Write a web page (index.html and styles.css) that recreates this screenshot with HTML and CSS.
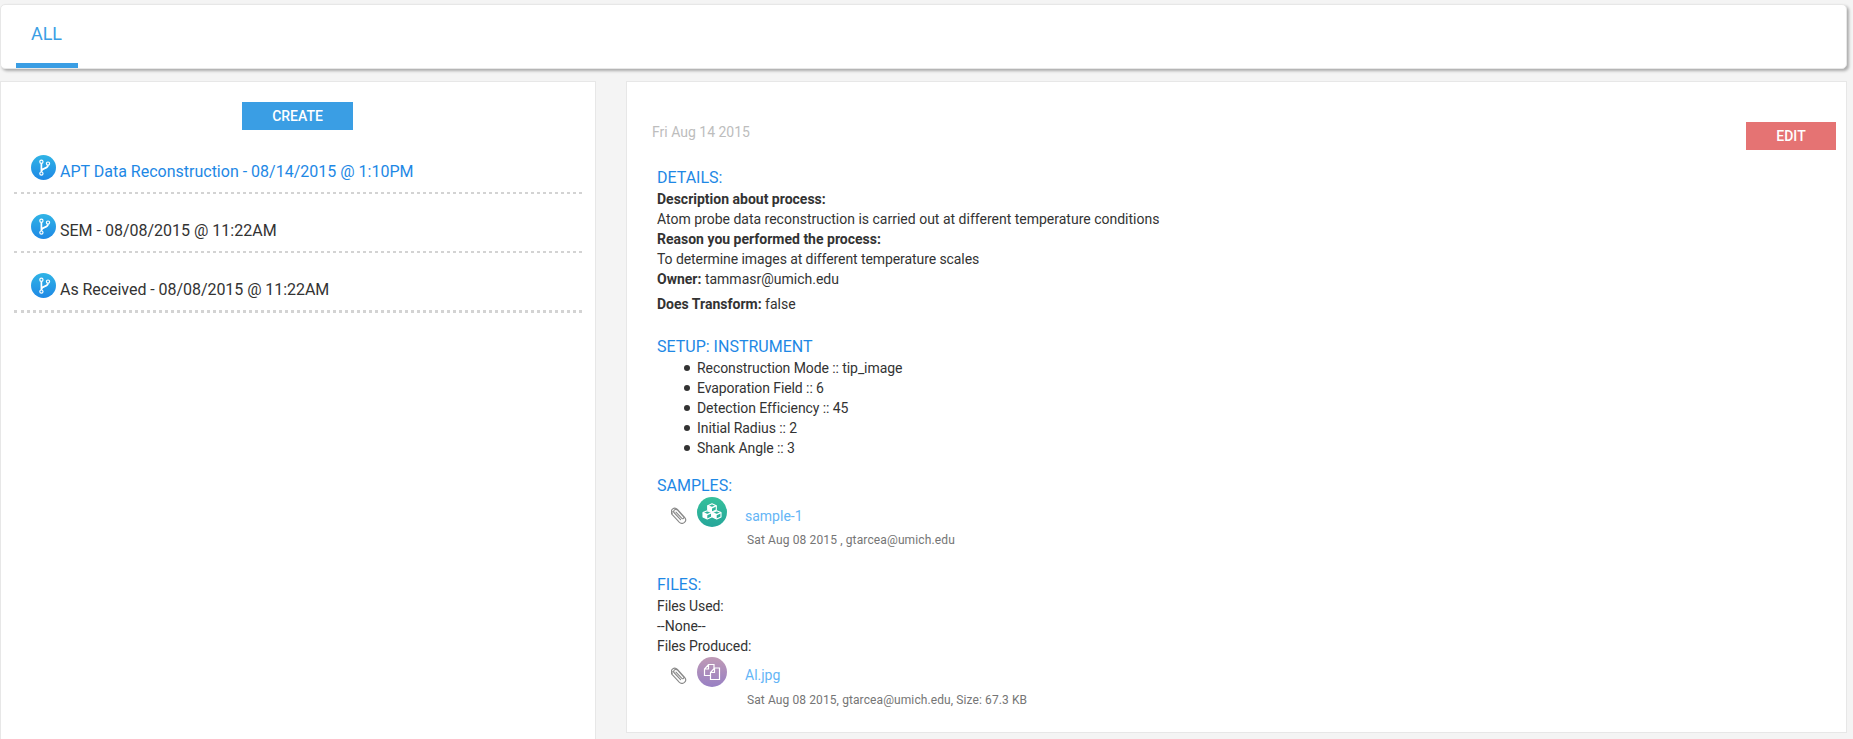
FILE: index.html
```html
<!DOCTYPE html>
<html lang="en">
<head>
<meta charset="utf-8">
<title>Processes</title>
<link rel="stylesheet" href="styles.css">
</head>
<body>
<svg class="defs" width="0" height="0">
  <defs>
    <linearGradient id="blue" x1="0" y1="0" x2="0" y2="1"><stop offset="0" stop-color="#30b4e6"/><stop offset="1" stop-color="#1e88e5"/></linearGradient>
    <linearGradient id="green" x1="0" y1="0" x2="0" y2="1"><stop offset="0" stop-color="#36c09b"/><stop offset="1" stop-color="#26a69a"/></linearGradient>
    <linearGradient id="purple" x1="0" y1="0" x2="0" y2="1"><stop offset="0" stop-color="#bf9ab5"/><stop offset="1" stop-color="#9880c4"/></linearGradient>
    <symbol id="branch" viewBox="0 0 25 25">
      <circle cx="12.5" cy="12.5" r="12.5" fill="url(#blue)"/>
      <g fill="none" stroke="#fff" stroke-width="1.2">
        <circle cx="10.4" cy="6.8" r="1.6"/><circle cx="10.4" cy="18.6" r="1.6"/><circle cx="17" cy="8.6" r="1.6"/>
        <path d="M10.4 8.4V17M17 10.2c0 3.8-6.4 2.600-6.500 6" stroke-width="1.700"/>
      </g>
    </symbol>
    <symbol id="clip" viewBox="0 0 16 17">
      <path d="M5 5.200l5.600 6c1.300 1.300 3-.3 1.800-1.700L6.600 3.200C4.500 1 1.500 3.700 3.400 6l6.200 6.600M3.400 6C1 3.200-.8 5.600 1.700 8.200l6.500 6.900c3.600 3.400 8.600-1 5.400-4.700L6.400 2.500C3.300-.8-1.300 2.900 1.200 6.600" fill="none" stroke="#8a8a8a" stroke-width="1.150" stroke-linecap="round"/>
    </symbol>
  </defs>
</svg>
<header class="tabs"><a class="tab">ALL</a></header>
<main class="columns">
  <section class="panel list">
    <button class="btn create">CREATE</button>
    <div class="row active"><svg class="badge"><use href="#branch"/></svg><span>APT Data Reconstruction - 08/14/2015 @ 1:10PM</span></div>
    <div class="row"><svg class="badge"><use href="#branch"/></svg><span>SEM - 08/08/2015 @ 11:22AM</span></div>
    <div class="row received"><svg class="badge"><use href="#branch"/></svg><span>As Received - 08/08/2015 @ 11:22AM</span></div>
  </section>
  <section class="panel detail">
    <div class="top"><span class="date">Fri Aug 14 2015</span><button class="btn edit">EDIT</button></div>
    <div class="body">
      <h2>DETAILS:</h2>
      <p><b>Description about process:</b></p>
      <p>Atom probe data reconstruction is carried out at different temperature conditions</p>
      <p><b>Reason you performed the process:</b></p>
      <p class="reason">To determine images at different temperature scales</p>
      <p><b>Owner:</b> tammasr@umich.edu</p>
      <p class="transform"><b>Does Transform:</b> false</p>
      <h2 class="setup">SETUP: INSTRUMENT</h2>
      <ul>
        <li>Reconstruction Mode :: tip_image</li>
        <li>Evaporation Field :: 6</li>
        <li>Detection Efficiency :: 45</li>
        <li>Initial Radius :: 2</li>
        <li>Shank Angle :: 3</li>
      </ul>
      <h2 class="samples">SAMPLES:</h2>
      <div class="item">
        <svg class="clip"><use href="#clip"/></svg>
        <svg class="disc" viewBox="0 0 30 30"><circle cx="15" cy="15" r="15" fill="url(#green)"/>
          <g fill="none" stroke="#fff" stroke-width="1.100" stroke-linejoin="round">
            <path d="M15 6.800l4.300 1.900v4.300L15 15.100l-4.300-2.100V8.700z"/>
            <path d="M10.300 13.700l4.300 1.900v4.300l-4.300 2.100L6 19.900v-4.300zM19.700 13.700l4.300 1.900v4.300l-4.300 2.100-4.300-2.100v-4.300z"/></g>
          <path d="M10.700 8.700l4.300 2v4.400L10.700 13zM6 15.600l4.300 2V22L6 19.900zM15.400 15.600l4.300 2V22l-4.300-2.100z" fill="#fff"/>
          <path d="M10.700 8.700l4.300 2 4.300-2M6 15.600l4.300 2 4.300-2M15.400 15.600l4.300 2 4.300-2" fill="none" stroke="#fff" stroke-width="1.300"/>
        </svg>
        <div class="info"><a>sample-1</a><small>Sat Aug 08 2015 , gtarcea@umich.edu</small></div>
      </div>
      <h2 class="files">FILES:</h2>
      <p class="used">Files Used:</p>
      <p>--None--</p>
      <p class="used">Files Produced:</p>
      <div class="item file">
        <svg class="clip"><use href="#clip"/></svg>
        <svg class="disc" viewBox="0 0 30 30"><circle cx="15" cy="15" r="15" fill="url(#purple)"/>
          <path d="M13.500 18.500H7.500V12l4-4.500h5.500v4M11.500 7.500V12h-4M13.500 22.500v-7l4-4.500h5v11.500zM17.500 11v4.500h-4" fill="none" stroke="#fff" stroke-width="1.200"/>
        </svg>
        <div class="info"><a>Al.jpg</a><small class="size">Sat Aug 08 2015, gtarcea@umich.edu, Size: 67.3 KB</small></div>
      </div>
    </div>
  </section>
</main>
</body>
</html>
```
FILE: styles.css
```css
* { box-sizing: border-box; }
html, body { height: 100%; }
body { margin: 0; padding-top: 4px; background: #f4f4f4; color: #333; font: 14px/20px Roboto, sans-serif; overflow: hidden; }
.defs { position: absolute; }
h2, p, ul { margin: 0; }
.tabs { width: 1847px; height: 65px; padding-left: 15px; background: #fff; border: 1px solid #e7e7e7; border-radius: 5px; box-shadow: 2px 2px 3px rgba(0, 0, 0, .3); }
.tab { display: block; width: 62px; height: 63px; padding: 19px 1px 0 0; border-bottom: 5px solid #3a9ee4; color: #3a9ee4; font-size: 18px; text-align: center; }
.columns { display: flex; align-items: flex-start; gap: 30px; margin-top: 12px; }
.panel { background: #fff; border: 1px solid #e7e7e7; }
.list { width: 596px; height: 670px; padding: 20px 13px; }
.btn { display: block; height: 28px; padding: 0; border: 0; color: #fff; font: 500 14px/28px Roboto, sans-serif; }
.create { width: 111px; margin: 0 0 6px 228px; background: #3a9ee4; }
.row { display: flex; align-items: flex-start; height: 59px; padding: 19px 0 0 17px; background: #fff; border-bottom: 3px dotted #d3d3d3; font-size: 16px; }
.row + .row { height: 60px; margin-top: -1px; padding-top: 20px; }
.row span { padding: 7px 0 0 4px; }
.received { letter-spacing: -.05px; }
.active { color: #1e88e5; }
.badge { width: 25px; height: 25px; }
.detail { width: 1221px; height: 652px; padding: 40px 10px 0 25px; }
.top { display: flex; justify-content: space-between; height: 45px; }
.date { color: #bdbdbd; }
.edit { width: 90px; background: #e57373; }
.body { padding-left: 5px; }
h2 { color: #1e88e5; font-size: 16px; font-weight: 400; line-height: 22px; }
.reason { letter-spacing: -.08px; }
.transform { margin-top: 5px; }
.setup { margin-top: 22px; }
ul { padding: 0 0 0 27px; list-style: none; }
li { display: flex; align-items: center; letter-spacing: -.08px; }
li::before { content: ""; width: 6px; height: 6px; margin-right: 7px; border-radius: 50%; background: #333; }
.samples { margin-top: 17px; }
.item { display: flex; height: 60px; padding-left: 14px; }
.clip { width: 16px; height: 17px; margin: 10px 10px 0 0; }
.disc { width: 30px; height: 30px; }
.info { padding: 9px 0 0 18px; }
.info a { display: block; color: #64b5f6; }
.info small { display: block; padding: 4px 0 0 2px; color: #757575; font-size: 12px; line-height: 20px; letter-spacing: .13px; }
.info .size { letter-spacing: .1px; }
.used { letter-spacing: -.1px; }
.files { margin-top: 17px; }
.file { padding-top: 1px; }
.file .info { padding-top: 8px; }
.file small { padding-top: 5px; }
```
